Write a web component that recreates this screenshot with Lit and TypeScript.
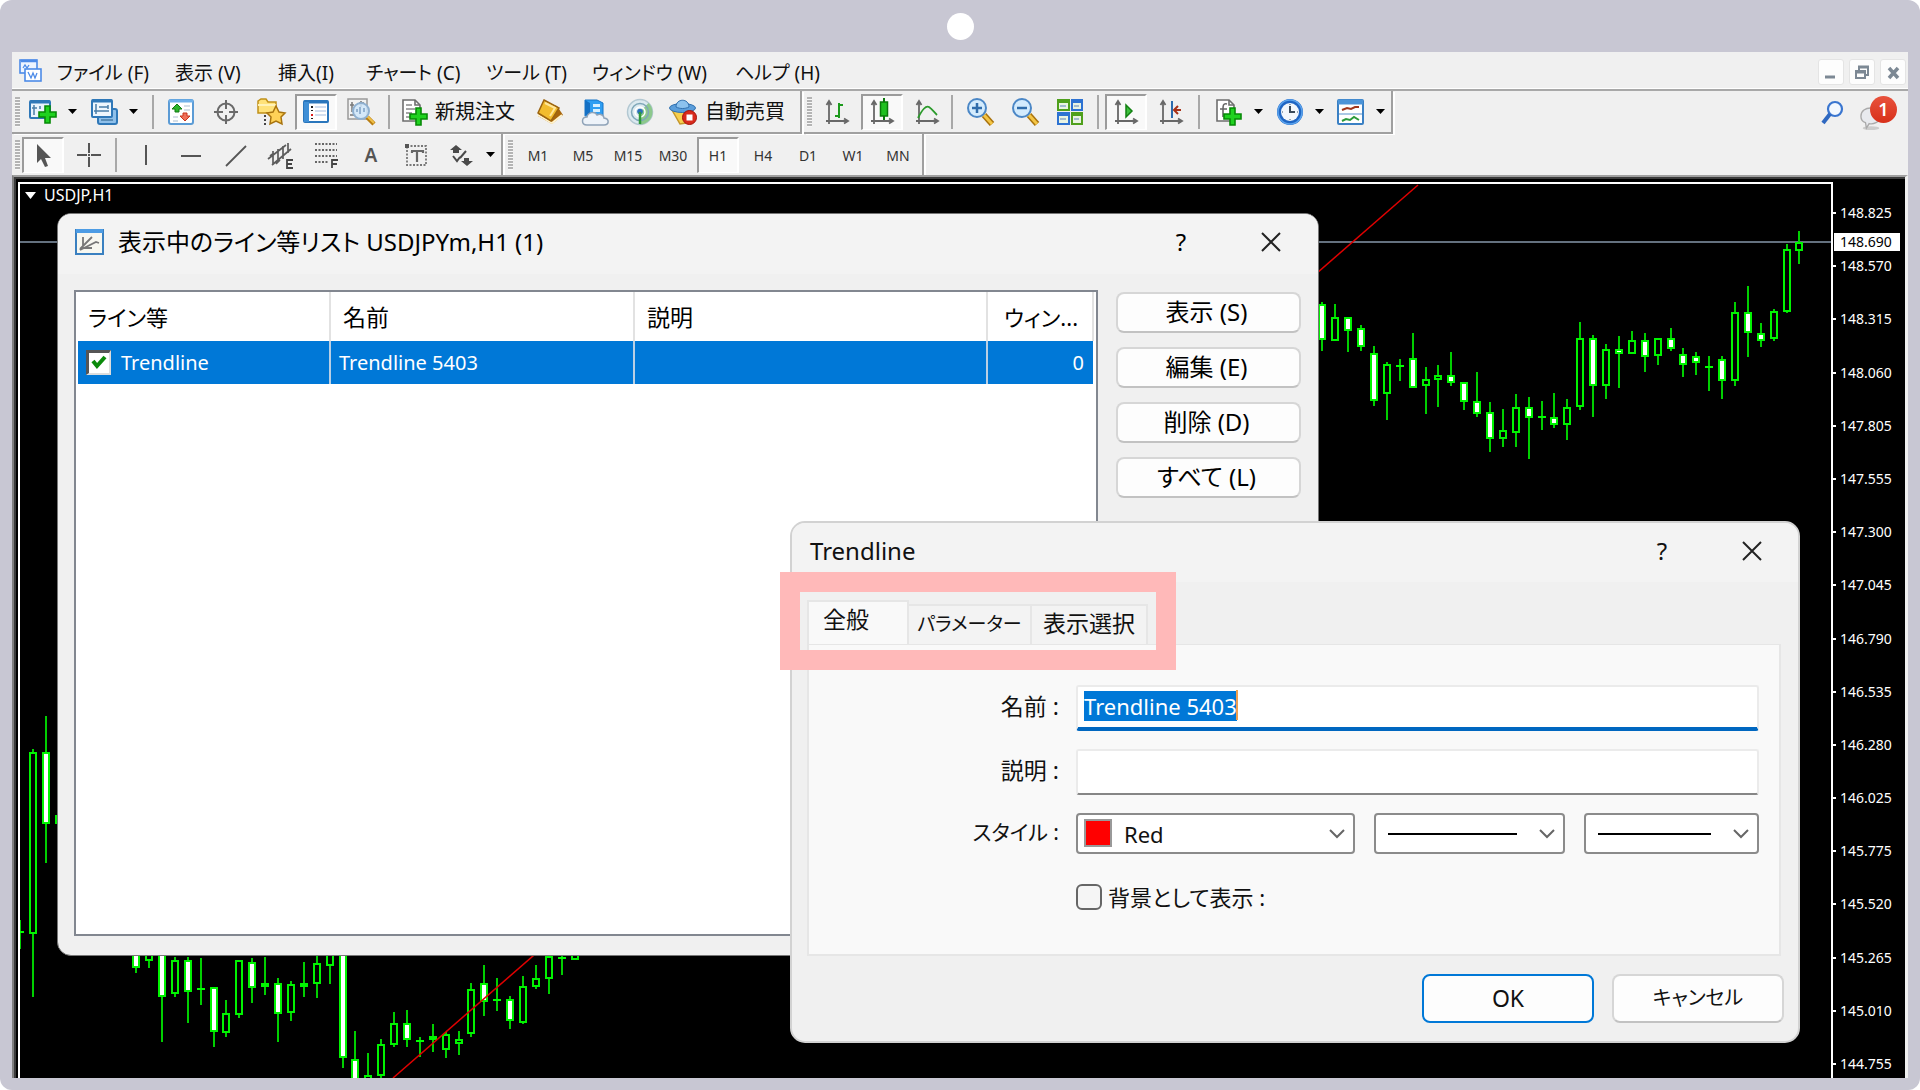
import { LitElement, html, svg, css, nothing } from "lit";
import type { TemplateResult } from "lit";
import { customElement, property } from "lit/decorators.js";
import { classMap } from "lit/directives/class-map.js";

const plus = (x: number, y: number) => svg`
  <path transform="translate(${x} ${y})" d="M7 1h5v6h6v5h-6v6H7v-6H1V7h6z" fill="#1fd21f" stroke="#078a07" stroke-width="1.6"/>`;

const sheet = svg`
  <path d="M2 2h12l5 5v16H2z" fill="#fff" stroke="#6e6e6e" stroke-width="1.6"/>
  <path d="M14 2v5h5" fill="none" stroke="#6e6e6e" stroke-width="1.6"/>`;

const axes = svg`
  <path d="M6 4v22M3 23h21M3.500 7L6 3l2.500 4M21 20.500l4 2.500-4 2.500" fill="none" stroke="#686868" stroke-width="1.800"/>`;

const icons: Record<string, TemplateResult> = {
  app: svg`
    <rect x="2" y="3" width="17" height="13" fill="#eef5ff" stroke="#4d8be8" stroke-width="1.600"/>
    <path d="M3 4h16" stroke="#4d8be8" stroke-width="2.500"/>
    <path d="M5 11l2-3 2 3 2-3" fill="none" stroke="#4d8be8" stroke-width="1.300"/>
    <rect x="7" y="12" width="16" height="12" fill="#fff" stroke="#4d8be8" stroke-width="1.600"/>
    <path d="M10 15l3 6 2-5 2 5 2-5" fill="none" stroke="#4d8be8" stroke-width="1.300"/>`,
  newChart: svg`
    <rect x="1" y="3" width="20" height="17" rx="1" fill="#eaf4fd" stroke="#2f78b8" stroke-width="2"/>
    <path d="M1 4h20" stroke="#2f78b8" stroke-width="3"/>
    <path d="M5 7v10M3 10h5M11 8v3" stroke="#4a7ea8" stroke-width="1.500"/>${plus(9, 7)}`,
  windows: svg`
    <rect x="8" y="11" width="19" height="15" rx="2" fill="#8fc0ea" stroke="#2f78b8" stroke-width="2"/>
    <rect x="2" y="2" width="20" height="17" rx="1" fill="#eef6fd" stroke="#2f78b8" stroke-width="2"/>
    <path d="M2 3h20" stroke="#2f78b8" stroke-width="3"/>
    <path d="M6 6v10M4 13h15M9 9h9M18 7v4M11 22h12" stroke="#4a7ea8" stroke-width="1.500"/>`,
  market: svg`
    <rect x="2" y="2" width="24" height="24" rx="2" fill="#fff" stroke="#5b9bd5" stroke-width="2"/>
    <path d="M2 3h24" stroke="#6fb0ea" stroke-width="3"/>
    <path d="M17 8h6M17 12h6M6 19h5M6 23h5" stroke="#c8d4e0" stroke-width="1.500"/>
    <path d="M10 6l5 5h-3v3H8v-3H5z" fill="#2bb52b" stroke="#127a12"/>
    <path d="M18 23l-5-5h3v-3h4v3h3z" fill="#f0705a" stroke="#c8321c"/>`,
  cross: svg`
    <circle cx="14" cy="14" r="8.500" fill="none" stroke="#6a6a6a" stroke-width="2"/>
    <path d="M14 2v9M14 17v9M2 14h9M17 14h9" stroke="#6a6a6a" stroke-width="2"/>`,
  folder: svg`
    <path d="M1 3l3-2h5l2 3h8v11H1z" fill="#ffe27a" stroke="#c09018" stroke-width="1.500"/>
    <path d="M1 7h18" stroke="#fff2b8" stroke-width="2"/>
    <path d="M8 17v10" stroke="#444" stroke-width="2" stroke-dasharray="2 2"/>
    <path d="M19 8l3 6 6 1-4 4 1 7-6-3-6 3 1-7-4-4 6-1z" fill="#ffd257" stroke="#a87410" stroke-width="1.500"/>`,
  navigator: svg`
    <rect x="2" y="3" width="24" height="21" rx="1" fill="#fff" stroke="#2a76bc" stroke-width="2"/>
    <path d="M2 4h24" stroke="#2a76bc" stroke-width="3"/>
    <rect x="2" y="4" width="5" height="20" fill="#3f8fd6"/>
    <path d="M13 9h11M13 13h11M13 17h11" stroke="#c3d3ea" stroke-width="1.500"/>
    <path d="M10 8v2M10 12v1M10 20v1" stroke="#222" stroke-width="2"/>
    <path d="M10 16v2" stroke="#e02020" stroke-width="2"/>`,
  tester: svg`
    <rect x="1" y="1" width="19" height="20" fill="#f2f2f2" stroke="#999" stroke-width="1.500"/>
    <path d="M5 4v10M3 7h4M14 3v6M12 5h5M3 17h6" stroke="#777" stroke-width="1.500"/>
    <path d="M20 19l7 7" stroke="#b87d12" stroke-width="4.500"/>
    <path d="M20 18l7 7" stroke="#f0c048" stroke-width="2"/>
    <circle cx="14" cy="13" r="8" fill="#cfe6fa" fill-opacity=".85" stroke="#8fb0d0" stroke-width="2"/>
    <path d="M10 14v-3M13 16V9M17 14v-4" stroke="#7da0c4" stroke-width="1.500"/>`,
  order: svg`${sheet}
    <path d="M5 7h6M5 11h9M5 15h6M5 19h4" stroke="#888" stroke-width="1.600"/>${plus(8, 9)}`,
  book: svg`
    <path d="M7 4l14 4 6 9-11 9-14-8z" fill="#a8660c"/>
    <path d="M2 17l14 8 10-8" fill="none" stroke="#fff3cc" stroke-width="2"/>
    <path d="M8 2l15 8-8 13L2 15z" fill="#f2bc2e" stroke="#9c6410" stroke-width="1.500"/>
    <path d="M9 5l10 5-5 8" fill="none" stroke="#ffe79a" stroke-width="2"/>`,
  server: svg`
    <path d="M4 2h12l6 3v13H4z" fill="#2f9ef2" stroke="#1574c8"/>
    <path d="M4 2l5 3v12H4z" fill="#1470c4"/>
    <path d="M12 6h7v3h-7zM12 11h7v3h-7z" fill="#d6efff"/>
    <path d="M6 27c-6 0-6-8 0-8 1-5 8-6 10-2 4-2 7 1 7 3 6 1 5 7 0 7z" fill="#eef3f9" stroke="#8fa3b8" stroke-width="1.500"/>`,
  radar: svg`
    <circle cx="14" cy="14" r="12.500" fill="#dceaf0" stroke="#b3c8d2" stroke-width="1.500"/>
    <path d="M14 14v12.500A12.500 12.500 0 0 0 26.500 14a12.500 12.500 0 0 0-4-9z" fill="#8cc88c"/>
    <circle cx="14" cy="14" r="8.500" fill="none" stroke="#7ea7b8" stroke-width="1.500"/>
    <circle cx="14" cy="14" r="5" fill="none" stroke="#fff" stroke-width="1.500"/>
    <circle cx="14" cy="13.500" r="2.800" fill="#2a70b8"/>
    <path d="M14 14v12" stroke="#2f9a3a" stroke-width="2.500"/>`,
  expert: svg`
    <path d="M3 12h21l-7 13-6 1z" fill="#f7cf4e" stroke="#c4962a" stroke-width="1.500"/>
    <ellipse cx="13.500" cy="10" rx="13" ry="4.500" fill="#5b9edb" stroke="#2f6fae"/>
    <path d="M7 9c0-9 13-9 13 0-4 2-9 2-13 0z" fill="#8cc2ee" stroke="#2f6fae"/>
    <circle cx="20.500" cy="19.500" r="7" fill="#d92a1c" stroke="#a31208"/>
    <rect x="17.500" y="16.500" width="6" height="6" fill="#fff"/>`,
  bars: svg`${axes}<path d="M16 5v15M16 7h4M12 18h4" fill="none" stroke="#1c9a1c" stroke-width="2"/>`,
  candles: svg`${axes}<path d="M16 0v22" stroke="#0b7a0b" stroke-width="2"/>
    <rect x="12.500" y="4" width="7" height="14" fill="#20c020" stroke="#0b7a0b" stroke-width="1.500"/>`,
  line: svg`${axes}<path d="M5 20C9 12 13 7 16 9s5 5 8 8" fill="none" stroke="#2a9a2a" stroke-width="1.800"/>`,
  zoomIn: svg`
    <path d="M18 17l8 9" stroke="#a8720c" stroke-width="6"/><path d="M18 17l8 9" stroke="#f4c545" stroke-width="3"/>
    <circle cx="11" cy="10" r="9" fill="#d3ebfd" stroke="#4b87c6" stroke-width="2"/>
    <path d="M6 10h10M11 5v10" stroke="#2f6cab" stroke-width="2.500"/>`,
  zoomOut: svg`
    <path d="M18 17l8 9" stroke="#a8720c" stroke-width="6"/><path d="M18 17l8 9" stroke="#f4c545" stroke-width="3"/>
    <circle cx="11" cy="10" r="9" fill="#d3ebfd" stroke="#4b87c6" stroke-width="2"/>
    <path d="M6 10h10" stroke="#2f6cab" stroke-width="2.500"/>`,
  tile: svg`
    <rect x="1" y="1" width="13" height="12" fill="#4fa01c"/><rect x="15" y="1" width="12" height="12" fill="#2d72d2"/>
    <rect x="1" y="14" width="13" height="13" fill="#2d72d2"/><rect x="15" y="14" width="12" height="13" fill="#4fa01c"/>
    <path d="M3 5h9v6H3zM17 5h8v6h-8zM3 18h9v7H3zM17 18h8v7h-8z" fill="#e9f3e2"/>
    <path d="M4 8h6M18 8h5M4 21h6M18 21h5" stroke="#8aa8c8" stroke-width="1.500"/>`,
  scroll: svg`${axes}<path d="M14 7v12l6-6z" fill="#3cc03c" stroke="#128012" stroke-width="1.500"/>`,
  shift: svg`${axes}<path d="M15 3v17" stroke="#2d6cae" stroke-width="2"/>
    <path d="M24 12h-6M21 8l-4 4 4 4" fill="none" stroke="#a83218" stroke-width="2"/>`,
  indicators: svg`${sheet}
    <path d="M12 6c-4-1-4 2-4 5v8M5 11h7" fill="none" stroke="#666" stroke-width="1.600"/>${plus(8, 9)}`,
  clock: svg`
    <circle cx="14" cy="14" r="13" fill="#1f66c4"/><circle cx="14" cy="14" r="12" fill="none" stroke="#5ba4ee" stroke-width="1.500"/>
    <circle cx="14" cy="14" r="9" fill="#f2f7fc"/><path d="M14 8v6h5" fill="none" stroke="#3a4a5a" stroke-width="2"/>
    <path d="M14 6v1M14 21v1M6 14h1M21 14h1" stroke="#7a8a9a" stroke-width="1.500"/>`,
  template: svg`
    <rect x="1" y="2" width="25" height="24" rx="1" fill="#fff" stroke="#3a80c4" stroke-width="2"/>
    <path d="M1 4h25" stroke="#4c94d8" stroke-width="5"/><path d="M2 16h23" stroke="#8fb6dc" stroke-width="1.500"/>
    <path d="M5 12l5-2 4 1 4-2h4" fill="none" stroke="#a0361c" stroke-width="2"/>
    <path d="M5 23l4-2 4 1 4-3 5 3" fill="none" stroke="#2a9a3a" stroke-width="2"/>`,
  cursor: svg`<path d="M8 3v19l4-4 4 8 3-1-3-8h6z" fill="#555"/>`,
  plusThin: svg`<path d="M15 2v10M15 16v10M3 14h10M17 14h10M14 14h2" stroke="#555" stroke-width="2"/>`,
  vline: svg`<path d="M14 4v20" stroke="#555" stroke-width="2"/>`,
  hline: svg`<path d="M4 15h20" stroke="#555" stroke-width="2"/>`,
  trend: svg`<path d="M4 25L24 5" stroke="#555" stroke-width="1.800"/>`,
  channel: svg`
    <path d="M1 18L19 4M5 24L24 8M6 10v13M11 8v12M16 5v13M21 2v10M3 15l4-3M9 23l4-4" stroke="#5c5c5c" stroke-width="1.700"/>
    <path d="M26 19h-6v8h6M20 23h5" fill="none" stroke="#444" stroke-width="1.800"/>`,
  fibo: svg`
    <path d="M3 3h22M3 9h22M3 15h22M3 21h14" stroke="#666" stroke-width="1.800" stroke-dasharray="2 1.500"/>
    <path d="M20 27v-8h6M20 23h5" fill="none" stroke="#444" stroke-width="1.800"/>`,
  label: svg`
    <rect x="5" y="5" width="19" height="19" fill="none" stroke="#777" stroke-width="1.800" stroke-dasharray="2 1.500"/>
    <rect x="3" y="3" width="4" height="4" fill="#555"/>
    <path d="M9 10h12v2M10 12v-2M15 10v11" fill="none" stroke="#666" stroke-width="2.200"/>`,
  arrows: svg`
    <path d="M9 4l6 5h-3v3H6V9H3z" fill="#4a4a4a"/><path d="M20 25l-6-5h3v-3h5v3h4z" fill="#4a4a4a"/>
    <path d="M6 15l4 5 3-4M13 17l6-7" fill="none" stroke="#4a4a4a" stroke-width="2"/>`,
  search: svg`
    <circle cx="17" cy="10" r="7" fill="#f4f9ff" stroke="#3a76d0" stroke-width="2.200"/>
    <path d="M12 15l-7 9" stroke="#2f68c0" stroke-width="4"/>`,
  listWindow: svg`
    <rect x="1" y="2" width="27" height="24" fill="#f7f7f0" stroke="#3a80c0" stroke-width="2"/>
    <path d="M1 3h27" stroke="#4d9ce4" stroke-width="4"/>
    <path d="M5 21L17 9M8 9v9l-3 4M5 22l16-8 3 1M7 20h10" fill="none" stroke="#777" stroke-width="1.800"/>`,
};

@customElement("tool-icon")
class ToolIcon extends LitElement {
  static styles = css`
    :host { display: block; flex: none; width: 28px; height: 28px; }
    svg { display: block; width: 100%; height: 100%; overflow: visible; }
  `;
  @property() name = "";
  render() {
    return html`<svg viewBox="0 0 28 28" aria-hidden="true">${icons[this.name] ?? nothing}</svg>`;
  }
}

/* Kinds: W falling (filled), H rising (hollow), D open equals close. */
type Candle = [slot: number, high: number, top: number, bottom: number, low: number, kind: "W" | "H" | "D"];

const candles: Candle[] = [
  [-1, 920, 931, 933, 949, "D"], [0, 749, 753, 933, 997, "H"], [1, 716, 753, 823, 863, "W"],
  [2, 816, 816, 823, 823, "H"], [8, 940, 940, 967, 973, "W"], [9, 940, 940, 960, 968, "H"],
  [10, 940, 940, 996, 1042, "W"], [11, 957, 961, 993, 997, "H"], [12, 957, 961, 991, 1023, "W"],
  [13, 958, 988, 990, 1005, "D"], [14, 988, 988, 1031, 1047, "W"], [15, 1000, 1014, 1032, 1037, "H"],
  [16, 961, 961, 1014, 1018, "H"], [17, 958, 963, 987, 1003, "W"], [18, 957, 984, 986, 995, "H"],
  [19, 978, 984, 1013, 1042, "W"], [20, 981, 985, 1012, 1021, "H"], [21, 962, 984, 986, 997, "H"],
  [22, 955, 964, 983, 998, "H"], [23, 940, 940, 965, 984, "H"], [24, 940, 940, 1057, 1068, "W"],
  [25, 1031, 1060, 1090, 1090, "W"], [26, 1053, 1076, 1090, 1090, "H"], [27, 1039, 1045, 1075, 1078, "H"],
  [28, 1012, 1024, 1044, 1047, "H"], [29, 1010, 1024, 1039, 1047, "W"], [30, 1037, 1040, 1042, 1057, "D"],
  [31, 1024, 1037, 1039, 1052, "H"], [32, 1032, 1035, 1049, 1058, "H"], [33, 1031, 1040, 1043, 1055, "H"],
  [34, 983, 990, 1033, 1037, "H"], [35, 965, 984, 1001, 1016, "W"], [36, 978, 999, 1001, 1011, "D"],
  [37, 996, 1000, 1020, 1029, "W"], [38, 976, 987, 1022, 1024, "H"], [39, 965, 979, 986, 989, "H"],
  [40, 950, 957, 978, 994, "H"], [41, 950, 957, 959, 975, "D"], [42, 950, 954, 959, 959, "H"],
  [100, 302, 305, 339, 351, "W"], [101, 304, 318, 340, 341, "H"], [102, 317, 318, 330, 352, "W"],
  [103, 325, 329, 346, 351, "W"], [104, 346, 354, 400, 406, "W"], [105, 362, 365, 393, 420, "H"],
  [106, 359, 365, 367, 381, "D"], [107, 333, 359, 387, 388, "W"], [108, 367, 380, 385, 414, "H"],
  [109, 365, 376, 379, 407, "H"], [110, 352, 376, 382, 386, "W"], [111, 382, 383, 401, 410, "W"],
  [112, 372, 402, 413, 417, "W"], [113, 402, 413, 438, 452, "W"], [114, 409, 431, 438, 447, "H"],
  [115, 394, 408, 432, 447, "H"], [116, 397, 408, 417, 459, "W"], [117, 401, 416, 418, 430, "D"],
  [118, 393, 418, 424, 428, "W"], [119, 399, 408, 424, 440, "H"], [120, 322, 339, 406, 410, "H"],
  [121, 335, 339, 385, 417, "W"], [122, 344, 350, 385, 399, "H"], [123, 336, 350, 353, 388, "W"],
  [124, 331, 341, 353, 354, "H"], [125, 333, 341, 356, 372, "W"], [126, 338, 339, 355, 365, "H"],
  [127, 328, 339, 348, 351, "W"], [128, 348, 355, 364, 377, "W"], [129, 352, 357, 362, 375, "W"],
  [130, 356, 366, 368, 391, "D"], [131, 356, 360, 380, 399, "W"], [132, 302, 313, 380, 386, "H"],
  [133, 286, 313, 332, 357, "W"], [134, 323, 334, 340, 347, "W"], [135, 309, 312, 338, 341, "H"],
  [136, 244, 250, 311, 313, "H"], [137, 231, 243, 250, 264, "H"],
];

const prices = [
  "148.825", "148.570", "148.315", "148.060", "147.805", "147.555", "147.300", "147.045", "146.790",
  "146.535", "146.280", "146.025", "145.775", "145.520", "145.265", "145.010", "144.755",
];

@customElement("price-chart")
class PriceChart extends LitElement {
  static styles = css`
    :host { display: flex; flex: 1; min-width: 0; position: relative; background: #000; color: #fff; }
    .plot { flex: 1; min-width: 0; position: relative; border: solid #fff; border-width: 2px 0 0 2px; overflow: hidden; }
    .canvas { position: absolute; inset: 0; width: 100%; height: 100%; }
    .title { position: absolute; left: 5px; top: 1px; display: flex; align-items: center; gap: 8px; font-size: 16px; line-height: 20px; }
    .title svg { width: 11px; height: 7px; }
    .axis { position: relative; width: 72px; border-left: 2px solid #fff; padding: 21px 0 4px; display: flex;
      flex-direction: column; justify-content: space-between; font-size: 14px; line-height: 20px; }
    .mark { display: flex; align-items: center; gap: 4px; }
    .tick { width: 3px; height: 2px; background: #fff; }
    .now { position: absolute; left: 1px; top: 51px; width: 66px; box-sizing: border-box; padding-left: 6px;
      background: #fff; color: #000; line-height: 18px; }
  `;
  private candle([slot, high, top, bottom, low, kind]: Candle) {
    const x = Math.round(33.1 + slot * 12.893);
    return svg`
      <path d="M${x} ${high}V${top}M${x} ${bottom}V${low}" stroke="#00cf00" stroke-width="2"/>
      ${kind === "D"
        ? svg`<rect x=${x - 4} y=${top} width="8" height=${bottom - top} fill="#00ff00"/>`
        : svg`<rect x=${x - 3} y=${top} width="6" height=${bottom - top} fill=${kind === "W" ? "#fff" : "#000"} stroke="#00f400" stroke-width="2"/>`}`;
  }
  render() {
    return html`
      <div class="plot">
        <svg class="canvas" role="img" aria-label="USDJP H1">
          <g transform="translate(-20 -184)">
            <path d="M20 242H1832" stroke="#64717f" stroke-width="2"/>
            ${candles.map((c) => this.candle(c))}
            <path d="M393 1078L1418 185" stroke="#e00000" stroke-width="1.500"/>
          </g>
        </svg>
        <div class="title"><svg viewBox="0 0 11 7"><path d="M0 0h11L5.500 7z" fill="#fff"/></svg>USDJP,H1</div>
      </div>
      <div class="axis">
        ${prices.map((p) => html`<div class="mark"><span class="tick"></span>${p}</div>`)}
        <div class="now">148.690</div>
      </div>`;
  }
}

const controlReset = css`
  *, *::before { box-sizing: border-box; }
  button, input, select { font: inherit; color: inherit; margin: 0; }
  button { padding: 0; border: 0; background: none; }
`;

const captionStyles = css`
  .caption { display: flex; align-items: center; background: #f3f3f3; font-size: 24px; line-height: 32px; }
  .caption h2 { flex: 1; margin: 0; font-size: 24px; font-weight: 400; }
  .caption-button { width: 90px; height: 48px; display: grid; place-items: center; }
  .caption-button svg { width: 20px; height: 20px; }
  .push { height: 41px; border: 2px solid #d6d6d6; border-bottom-color: #c2c2c2; border-radius: 8px; background: #fdfdfd;
    font-size: 24px; line-height: 28px; }
`;

const closeGlyph = html`<svg viewBox="0 0 20 20" aria-hidden="true"><path d="M1 1l18 18M19 1L1 19" stroke="#222" stroke-width="2"/></svg>`;

@customElement("object-list")
class ObjectList extends LitElement {
  static styles = [controlReset, captionStyles, css`
    :host { display: flex; flex-direction: column; border: 1px solid #777; border-radius: 14px; background: #f0f0f0;
      box-sizing: border-box; overflow: hidden; color: #000; }
    .caption { height: 60px; padding: 0 2px 4px 16px; }
    .caption h2 { padding-left: 14px; }
    tool-icon { width: 30px; height: 28px; }
    .content { flex: 1; display: flex; gap: 18px; padding: 16px 17px 19px 16px; }
    .list { flex: 1; border: 2px solid #828790; background: #fff; padding: 0 2px; }
    table { width: 100%; table-layout: fixed; border-collapse: collapse; }
    th, td { padding: 0; text-align: left; font-weight: 400; white-space: nowrap; }
    th { height: 49px; font-size: 23px; line-height: 30px; padding-left: 12px; border-right: 2px solid #e2e2e2; }
    th:first-child { padding-left: 10px; font-size: 22px; }
    td { height: 43px; font-size: 20px; line-height: 28px; padding-left: 8px; background: #0078d7; color: #fff; border-right: 2px solid #b9cfe4; }
    td:last-child { border-right: 0; text-align: right; padding-right: 9px; }
    .kind { width: 252px; }
    .name { width: 304px; }
    .place { width: 106px; }
    th.place-head { padding-left: 16px; font-size: 22px; }
    .item { display: flex; align-items: center; gap: 10px; }
    .tick { display: grid; width: 25px; height: 25px; }
    .tick > * { grid-area: 1 / 1; width: 25px; height: 25px; }
    .tick input { appearance: none; background: #fff; border: solid; border-width: 3px 2px 2px 3px; border-color: #555 #ddd #ddd #555; }
    .tick svg { pointer-events: none; z-index: 1; }
    .actions { width: 185px; display: flex; flex-direction: column; gap: 14px; padding-top: 2px; }
    .actions .push { padding: 0 4px 2px 0; }
  `];
  render() {
    return html`
      <header class="caption">
        <tool-icon name="listWindow"></tool-icon>
        <h2>表示中のライン等リスト USDJPYm,H1 (1)</h2>
        <button class="caption-button">?</button>
        <button class="caption-button" aria-label="閉じる">${closeGlyph}</button>
      </header>
      <div class="content">
        <div class="list">
          <table>
            <colgroup><col class="kind"><col class="name"><col><col class="place"></colgroup>
            <thead><tr><th>ライン等</th><th>名前</th><th>説明</th><th class="place-head">ウィン...</th></tr></thead>
            <tbody><tr>
              <td><label class="item"><span class="tick"><input type="checkbox" checked>
                <svg viewBox="0 0 25 25"><path d="M7 11l4 5 8-9" fill="none" stroke="#0a8a0a" stroke-width="4"/></svg></span>Trendline</label></td>
              <td>Trendline 5403</td><td></td><td>0</td>
            </tr></tbody>
          </table>
        </div>
        <div class="actions">
          ${["表示 (S)", "編集 (E)", "削除 (D)", "すべて (L)"].map((t) => html`<button class="push">${t}</button>`)}
        </div>
      </div>`;
  }
}

@customElement("object-properties")
class ObjectProperties extends LitElement {
  static styles = [controlReset, captionStyles, css`
    :host { display: flex; flex-direction: column; border: 2px solid #d2d2d2; border-radius: 15px; background: #f0f0f0;
      box-sizing: border-box; overflow: hidden; color: #111; }
    .caption { height: 59px; padding: 0 1px 4px 18px; }
    .tabs { display: flex; align-items: flex-end; padding: 18px 15px 0; font-size: 23px; line-height: 30px; }
    .tab { height: 40px; border: 2px solid #e6e6e6; border-bottom: 0; border-left-width: 0; background: #f3f3f3; padding: 0 11px 4px; white-space: nowrap; }
    .tab.current { height: 44px; width: 102px; border-left-width: 2px; background: #f9f9f9; text-align: left; padding: 0 14px 8px; }
    .tab.narrow { width: 123px; padding: 0 0 2px; font-size: 19px; }
    .panel { margin: 0 17px 0 15px; border: 2px solid #e6e6e6; border-top-width: 1px; background: #f9f9f9; height: 312px; padding: 40px 20px 0 0;
      display: grid; grid-template-columns: 250px 1fr; column-gap: 17px; row-gap: 18px; align-content: start; align-items: center;
      font-size: 23px; line-height: 30px; }
    .caption-label { text-align: right; padding-bottom: 4px; }
    .caption-label.kana { font-size: 21px; }
    .field { position: relative; height: 46px; }
    .text { width: 100%; height: 46px; border: 2px solid #ebebeb; border-bottom: 2px solid #868686; border-radius: 3px; background: #fff;
      padding: 0 6px; font-size: 22px; line-height: 30px; outline: none; }
    .text.focused { border-bottom: 4px solid #0067c0; padding-bottom: 2px; }
    .text::selection { background: #0078d7; color: #fff; }
    .caret { position: absolute; left: 160px; top: 5px; width: 2px; height: 30px; background: #f0a050; }
    .combos { display: flex; gap: 19px; }
    .combo { position: relative; height: 41px; flex: 175; }
    .combo.colour { flex: 279; }
    .combo.dash { flex: 191; }
    .combo select { appearance: none; width: 100%; height: 41px; border: 2px solid #8b8b8b; border-radius: 4px; background: #fff; padding-left: 46px; font-size: 22px; }
    .swatch { position: absolute; left: 8px; top: 6px; width: 28px; height: 28px; background: #f00; border: 2px solid #999; }
    .chevron { position: absolute; right: 10px; top: 16px; width: 16px; height: 10px; pointer-events: none; }
    .stroke { position: absolute; left: 14px; right: 48px; top: 20px; height: 2px; background: #000; pointer-events: none; }
    .option { grid-column: 2; height: 50px; display: flex; align-items: center; gap: 6px; font-size: 22px; }
    .option input { appearance: none; width: 26px; height: 26px; border: 2px solid #666; border-radius: 6px; background: #f5f5f5; }
    .footer { display: flex; justify-content: flex-end; gap: 18px; padding: 18px 14px 18px; }
    .footer .push { width: 172px; height: 49px; padding-bottom: 2px; }
    .footer .primary { border-color: #0078d7; font-size: 23px; }
    .footer .kana { font-size: 20px; }
  `];
  firstUpdated() {
    const input = this.renderRoot.querySelector<HTMLInputElement>("#name");
    input?.focus();
    input?.select();
  }
  private chevron = html`<svg class="chevron" viewBox="0 0 16 10" aria-hidden="true"><path d="M1 1l7 7 7-7" fill="none" stroke="#666" stroke-width="2"/></svg>`;
  render() {
    return html`
      <header class="caption">
        <h2>Trendline</h2>
        <button class="caption-button">?</button>
        <button class="caption-button" aria-label="閉じる">${closeGlyph}</button>
      </header>
      <div class="tabs" role="tablist">
        <button class="tab current" role="tab" aria-selected="true">全般</button>
        <button class="tab narrow" role="tab" aria-selected="false">パラメーター</button>
        <button class="tab" role="tab" aria-selected="false">表示選択</button>
      </div>
      <div class="panel" role="tabpanel">
        <label class="caption-label" for="name">名前 :</label>
        <div class="field"><input class="text focused" id="name" value="Trendline 5403"><span class="caret"></span></div>
        <label class="caption-label" for="note">説明 :</label>
        <div class="field"><input class="text" id="note"></div>
        <label class="caption-label kana" for="colour">スタイル :</label>
        <div class="combos">
          <div class="combo colour"><select id="colour"><option>Red</option></select><span class="swatch"></span>${this.chevron}</div>
          <div class="combo dash"><select aria-label="線種"><option></option></select><span class="stroke"></span>${this.chevron}</div>
          <div class="combo"><select aria-label="太さ"><option></option></select><span class="stroke"></span>${this.chevron}</div>
        </div>
        <label class="option"><input type="checkbox">背景として表示 :</label>
      </div>
      <footer class="footer">
        <button class="push primary">OK</button>
        <button class="push kana">キャンセル</button>
      </footer>`;
  }
}

const menus: [label: string, slot: string][] = [
  ["ファイル (F)", "m118"], ["表示 (V)", "m103"], ["挿入(I)", "m88"], ["チャート (C)", "m120"],
  ["ツール (T)", "m106"], ["ウィンドウ (W)", "m143"], ["ヘルプ (H)", "m118"],
];

@customElement("app-root")
class AppRoot extends LitElement {
  static styles = [controlReset, css`
    :host { display: block; font-family: "Noto Sans", "Noto Sans CJK JP", sans-serif; font-feature-settings: "palt"; color: #111; }
    .frame { min-height: 100vh; display: flex; flex-direction: column; padding: 0 12px 12px; border-radius: 12px; background: #c8c7d3; }
    .bezel { height: 52px; display: flex; justify-content: center; align-items: center; }
    .lens { width: 27px; height: 27px; border-radius: 50%; background: #fff; }
    .menubar { height: 39px; display: flex; align-items: center; background: #f0f0f0; border-bottom: 2px solid #a8a8a8;
      box-shadow: inset 0 -1px #fff; padding: 0 2px 0 6px; }
    .menus { flex: 1; display: flex; padding: 4px 0 0 11px; font-size: 19px; line-height: 28px; }
    .menus button { text-align: left; white-space: nowrap; }
    .m118 { width: 118px; } .m103 { width: 103px; } .m88 { width: 88px; } .m120 { width: 120px; } .m106 { width: 106px; } .m143 { width: 143px; }
    .controls { display: flex; gap: 5px; padding-top: 2px; }
    .control { width: 26px; height: 26px; border: 1px solid #e4e4e4; border-radius: 3px; background: #fdfdfd; }
    .control svg { display: block; width: 24px; height: 24px; }
    .bars { background: #f0f0f0; display: flex; flex-direction: column; }
    .bar { display: flex; height: 43px; }
    .bar.lower { height: 41px; }
    .group { display: flex; align-items: center; gap: 3px; padding: 0 3px; border-right: 2px solid #a0a0a0; box-shadow: 2px 0 #fff; }
    .group + .group { margin-left: 2px; }
    .upper .group { border-bottom: 2px solid #a0a0a0; box-shadow: 2px 1px #fff; }
    .grip { width: 5px; height: 30px; background: repeating-linear-gradient(#b4b4b4 0 2px, #f8f8f8 2px 3px); margin-right: -1px; }
    .group + .group .grip { margin-right: 1px; }
    .tool { width: 42px; height: 36px; display: grid; place-items: center; border: solid transparent; border-width: 2px 2px 1px 2px; }
    .tool.on { background: #f9f9f9; border-color: #9b9b9b #fff #fff #9b9b9b; }
    .drop { width: 16px; height: 36px; display: grid; place-items: center; margin-left: -3px; }
    .drop svg { width: 9px; height: 5px; }
    .rule { width: 2px; height: 34px; background: #a8a8a8; margin: 0 3px 0 8px; }
    .rule.tight { margin: 0 5px 0 3px; }
    .rule.snug { margin: 0 3px 0 3px; }
    .rule.flush { margin: 0 3px 0 0; }
    .wide { display: flex; align-items: center; gap: 6px; height: 36px; padding: 0 11px 0 3px; font-size: 20px; line-height: 28px; white-space: nowrap; }
    .wide.auto { gap: 8px; padding: 0 12px 0 5px; }
    .period { font-size: 14px; color: #333; }
    .letter { font-size: 19px; font-weight: 600; color: #555; }
    .spacer { flex: 1; }
    .status { display: flex; align-items: center; gap: 14px; }
    .inbox { position: relative; width: 48px; height: 36px; }
    .inbox svg { width: 22px; height: 24px; position: absolute; left: 0; top: 12px; }
    .badge { position: absolute; left: 10px; top: 1px; width: 27px; height: 27px; border-radius: 50%; background: linear-gradient(#e8523c, #d8301a); color: #fff;
      font-size: 18px; line-height: 26px; font-weight: 600; text-align: center; }
    .desk { position: relative; flex: 1; display: flex; background: #000; border: 2px solid #808080; border-top-color: #a0a0a0;
      border-right: 3px solid #f0f0f0; border-bottom: 0; padding: 5px 0 0 4px; box-shadow: inset 2px 2px #3c3c3c; }
    .list-window { position: absolute; left: 43px; top: 36px; width: 1262px; height: 743px; }
    .props-window { position: absolute; left: 776px; top: 344px; width: 1010px; height: 522px; }
    .callout { position: absolute; left: 766px; top: 395px; width: 396px; height: 98px; border: 20px solid #ffb9b9; pointer-events: none; }
  `];
  private tool(name: string, on = false) {
    return html`<button class=${classMap({ tool: true, on })} aria-label=${name}><tool-icon name=${name}></tool-icon></button>`;
  }
  private drop() {
    return html`<button class="drop" aria-label="一覧"><svg viewBox="0 0 9 5"><path d="M0 0h9L4.500 5z"/></svg></button>`;
  }
  private rule(kind = "") {
    return html`<span class="rule ${kind}"></span>`;
  }
  render() {
    return html`
      <div class="frame">
        <div class="bezel"><span class="lens"></span></div>
        <header class="menubar">
          <tool-icon name="app"></tool-icon>
          <nav class="menus">${menus.map(([t, w]) => html`<button class=${w}>${t}</button>`)}</nav>
          <div class="controls">
            <button class="control" aria-label="最小化"><svg viewBox="0 0 24 24"><path d="M6 17h10" stroke="#7c8894" stroke-width="3"/></svg></button>
            <button class="control" aria-label="元に戻す"><svg viewBox="0 0 24 24"><path d="M9 10V7h9v8h-3M6 11h9v7H6z" fill="none" stroke="#7c8894" stroke-width="2"/><path d="M8 7h11M5 12h11" stroke="#7c8894" stroke-width="3"/></svg></button>
            <button class="control" aria-label="閉じる"><svg viewBox="0 0 24 24"><path d="M8 8l9 10M17 8L8 18" stroke="#7c8894" stroke-width="3.500"/></svg></button>
          </div>
        </header>
        <div class="bars">
          <div class="bar upper">
            <div class="group">
              <span class="grip"></span>
              ${this.tool("newChart")}${this.drop()}${this.tool("windows")}${this.drop()}${this.rule()}
              ${this.tool("market")}${this.tool("cross")}${this.tool("folder")}${this.tool("navigator", true)}${this.tool("tester")}${this.rule("tight")}
              <button class="wide"><tool-icon name="order"></tool-icon>新規注文</button>
              ${this.tool("book")}${this.tool("server")}${this.tool("radar")}
              <button class="wide auto"><tool-icon name="expert"></tool-icon>自動売買</button>
            </div>
            <div class="group">
              <span class="grip"></span>
              ${this.tool("bars")}${this.tool("candles", true)}${this.tool("line")}${this.rule("flush")}
              ${this.tool("zoomIn")}${this.tool("zoomOut")}${this.tool("tile")}${this.rule("snug")}
              ${this.tool("scroll", true)}${this.tool("shift")}${this.rule("tight")}
              ${this.tool("indicators")}${this.drop()}${this.tool("clock")}${this.drop()}${this.tool("template")}${this.drop()}
            </div>
            <span class="spacer"></span>
            <div class="status">
              <button aria-label="検索"><tool-icon name="search"></tool-icon></button>
              <button class="inbox" aria-label="通知">
                <svg viewBox="0 0 24 26"><ellipse cx="12" cy="23" rx="9" ry="2" fill="#ccc"/><path d="M1 10c0-12 21-12 21 0 0 7-8 9-12 8l-3 5-1-6c-3-1-5-4-5-7z" fill="#e8eaee" stroke="#aaa" stroke-width="1.500"/></svg>
                <span class="badge">1</span>
              </button>
            </div>
          </div>
          <div class="bar lower">
            <div class="group">
              <span class="grip"></span>
              ${this.tool("cursor", true)}${this.tool("plusThin")}${this.rule("tight")}
              ${["vline", "hline", "trend", "channel", "fibo"].map((n) => this.tool(n))}
              <button class="tool letter">A</button>
              ${this.tool("label")}${this.tool("arrows")}${this.drop()}
            </div>
            <div class="group">
              <span class="grip"></span>
              ${["M1", "M5", "M15", "M30", "H1", "H4", "D1", "W1", "MN"].map((p) => html`<button class=${classMap({ tool: true, period: true, on: p === "H1" })}>${p}</button>`)}
            </div>
          </div>
        </div>
        <main class="desk">
          <price-chart></price-chart>
          <object-list class="list-window"></object-list>
          <object-properties class="props-window"></object-properties>
          <div class="callout"></div>
        </main>
      </div>`;
  }
}
